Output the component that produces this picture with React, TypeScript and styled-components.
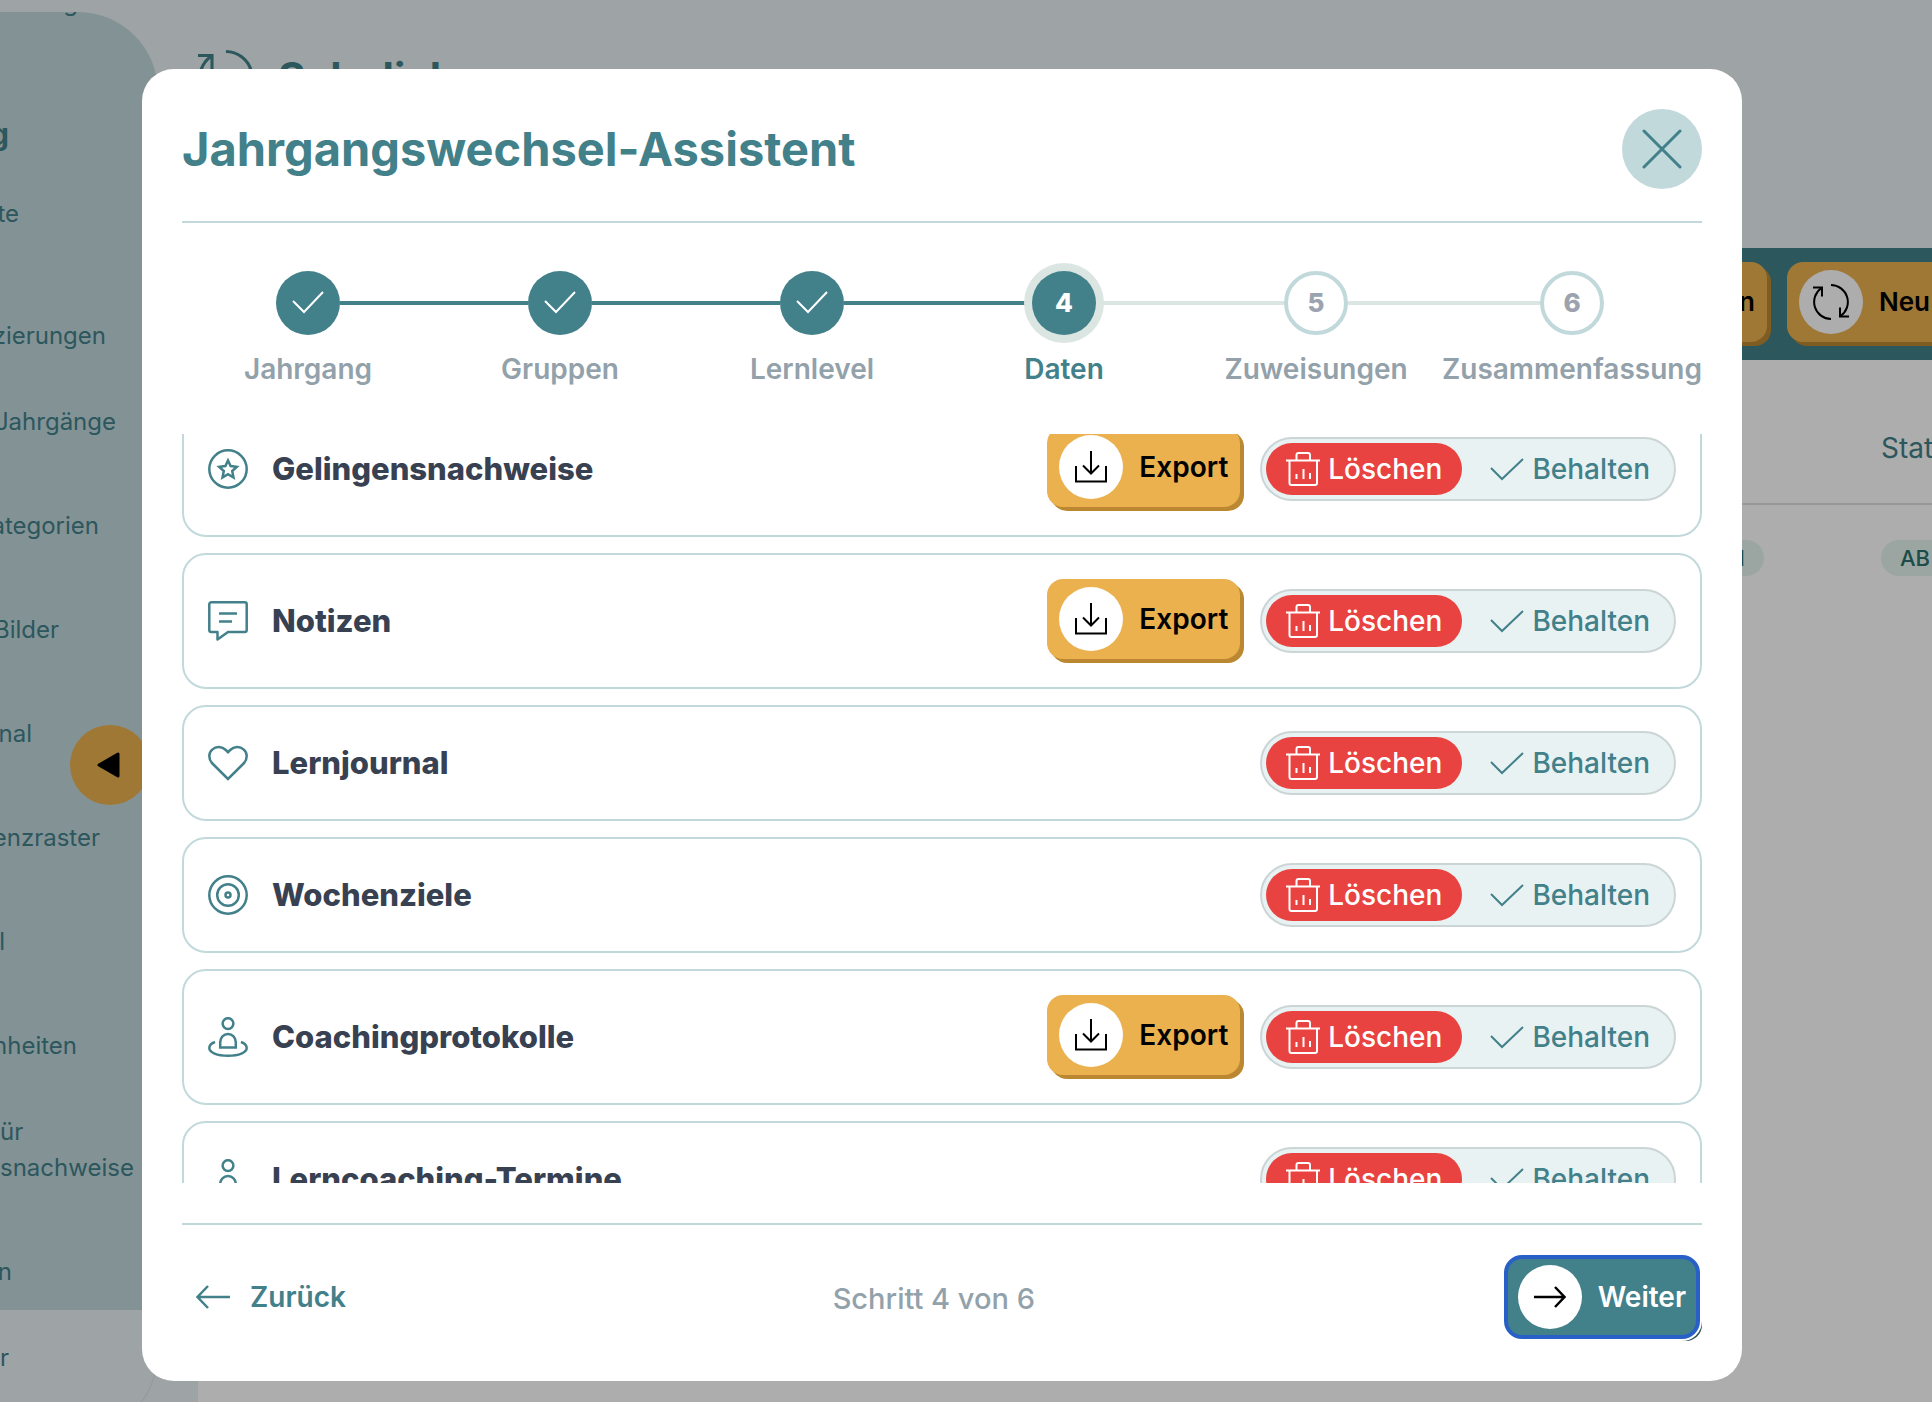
import React, { useLayoutEffect, useRef, useState } from "react";
import styled, { createGlobalStyle, css } from "styled-components";

const c = {
  teal: "#42808a",
  aqua: "#c2d9dc",
  mist: "#e9f2f3",
  sage: "#dbe5e1",
  amber: "#ebb14f",
  amberDark: "#bb8831",
  red: "#e84341",
  ink: "#384152",
  muted: "#92a1aa",
};

const Global = createGlobalStyle`
  *, *::before, *::after { box-sizing: border-box; }
  body { margin: 0; font-family: Inter, "Liberation Sans", sans-serif; font-size: 28px; line-height: 36px; color: ${c.teal}; }
  button { font: inherit; color: inherit; border: 0; background: none; padding: 0; cursor: pointer; }
  h1, h2, h3, ol, ul { margin: 0; padding: 0; list-style: none; }
  svg { display: block; flex: none; fill: none; stroke: currentColor; }
`;

/* ---------- icons ---------- */

const RefreshIcon = ({ size = 36, weight = 2 }: { size?: number; weight?: number }) => (
  <svg width={size} height={size} viewBox="0 0 36 36" strokeWidth={weight}>
    <path d="M18 35A17 17 0 0 1 8.500 4" />
    <path d="M0 3.500H9V12.500" />
    <path d="M18 1A17 17 0 0 1 27.500 32" />
    <path d="M36 32.500H27V23.500" />
  </svg>
);
const CloseIcon = () => (
  <svg width="40" height="40" viewBox="0 0 40 40" strokeWidth="3" strokeLinecap="round">
    <path d="M2 2L38 38M38 2L2 38" />
  </svg>
);
const StepCheckIcon = () => (
  <svg width="32" height="32" viewBox="0 0 32 32" strokeWidth="2">
    <path d="M1 14L12 25L31 5" />
  </svg>
);
const CheckIcon = () => (
  <svg width="34" height="34" viewBox="0 0 34 34" strokeWidth="2">
    <path d="M1 16L12 27L33 7" />
  </svg>
);
const TrashIcon = () => (
  <svg width="34" height="34" viewBox="0 0 34 34" strokeWidth="2" strokeLinejoin="round">
    <path d="M0 8.500H34M10.500 8.500V3A2 2 0 0 1 12.500 1H22A2 2 0 0 1 24 3V8.500" />
    <path d="M3.500 8.500V31A2 2 0 0 0 5.500 33H29A2 2 0 0 0 31 31V8.500" />
    <path d="M10.500 27V22M17.500 27V17M24 27V21" />
  </svg>
);
const DownloadIcon = () => (
  <svg width="32" height="32" viewBox="0 0 32 32" strokeWidth="2">
    <path d="M16 0V22M8 14.500L16 22.500L24 14.500M1 15V30.500H31V15" />
  </svg>
);
const ArrowLeft = () => (
  <svg width="34" height="24" viewBox="0 0 34 24" strokeWidth="2.500">
    <path d="M34 12H1.500M12 1L1.500 12L12 23" />
  </svg>
);
const ArrowRight = () => (
  <svg width="32" height="22" viewBox="0 0 32 22" strokeWidth="2.500">
    <path d="M0 11H30.500M21 1L30.500 11L21 21" />
  </svg>
);
const Triangle = () => (
  <svg width="28" height="28" viewBox="0 0 28 28">
    <path d="M3 14L22 3V25Z" fill="#000" stroke="#000" strokeWidth="3" strokeLinejoin="round" />
  </svg>
);

const Glyph = ({ children }: { children: React.ReactNode }) => (
  <svg width="40" height="40" viewBox="0 0 40 40" strokeWidth="2.500" stroke={c.teal} aria-hidden="true">
    {children}
  </svg>
);
const icons = {
  star: (
    <Glyph>
      <circle cx="20" cy="20" r="18.700" />
      <path d="M20 11.500L22.600 17L28.800 17.800L24.200 22L25.500 28.500L20 25.200L14.500 28.500L15.800 22L11.200 17.800L17.400 17Z" />
    </Glyph>
  ),
  note: (
    <Glyph>
      <path d="M3.300 1.300H36.700A2 2 0 0 1 38.700 3.300V29A2 2 0 0 1 36.700 31H20L9.500 38.500V31H3.300A2 2 0 0 1 1.300 29V3.300A2 2 0 0 1 3.300 1.300Z" strokeLinejoin="round" />
      <path d="M11 12.500H29M11 20.500H24" />
    </Glyph>
  ),
  heart: (
    <Glyph>
      <path d="M20 36L4.400 20.500C0.300 16.500 0.300 10 4.200 6.600C8.200 3 14 3.300 17.800 7L20 9.200L22.200 7C26 3.300 31.800 3 35.800 6.600C39.700 10 39.700 16.500 35.600 20.500Z" />
    </Glyph>
  ),
  target: (
    <Glyph>
      <circle cx="20" cy="20" r="18.700" />
      <circle cx="20" cy="20" r="10.800" />
      <circle cx="20" cy="20" r="2.500" />
    </Glyph>
  ),
  coach: (
    <Glyph>
      <circle cx="20" cy="6.600" r="5.400" />
      <path d="M12.200 30.500V25A7.800 8 0 0 1 27.800 25V30.500Z" />
      <path d="M7 25C3 26.500 1.300 28.500 1.300 31C1.300 35.500 9 38.700 20 38.700S38.700 35.500 38.700 31C38.700 28.500 37 26.500 33 25" />
    </Glyph>
  ),
};

/* ---------- page behind the dialog ---------- */

const Page = styled.div`
  display: flex;
  height: 100vh;
  overflow: hidden;
  background: #fff;
`;
const SideColumn = styled.div`
  flex: none;
  width: 198px;
  padding: 12px 40px 0 0;
  background: ${c.mist};
`;
const SidePanel = styled.nav`
  overflow: hidden;
  padding-bottom: 4px;
  border-top-right-radius: 80px;
  background: ${c.aqua};
`;
const SideCut = styled.div`
  display: flex;
  align-items: flex-end;
  justify-content: flex-end;
  width: 78px;
  height: 9px;
  font-size: 24px;
`;
const SideHeading = styled.h3`
  display: flex;
  align-items: flex-end;
  justify-content: flex-end;
  width: 9px;
  height: 141px;
  padding-bottom: 8px;
  font-size: 30px;
  line-height: 40px;
`;
const SideItem = styled.a<{ $end: number; $low?: boolean; $start?: boolean }>`
  display: flex;
  flex-direction: column;
  align-items: ${(p) => (p.$start ? "flex-start" : "flex-end")};
  justify-content: center;
  width: ${(p) => p.$end}px;
  height: 104px;
  padding-top: ${(p) => (p.$low ? 36 : 0)}px;
  font-size: 24px;
  white-space: nowrap;
  color: inherit;
  text-decoration: none;
`;
const SideFooter = styled.div`
  height: 124px;
  border: solid #d5e0e2;
  border-width: 0 1px 1px 0;
  border-bottom-right-radius: 80px;

  ${SideItem} {
    height: 96px;
  }
`;
const Collapse = styled.button`
  position: absolute;
  left: 70px;
  top: 725px;
  display: grid;
  place-items: center;
  width: 80px;
  height: 80px;
  border-radius: 50%;
  background: ${c.amber};
`;
const Main = styled.main`
  flex: 1;
  min-width: 0;
`;
const Hero = styled.header`
  display: flex;
  align-items: flex-start;
  gap: 24px;
  height: 248px;
  padding-top: 50px;
  background: ${c.mist};
`;
const PageTitle = styled.h1`
  font-size: 42px;
  line-height: 56px;
`;
const Bar = styled.div`
  display: grid;
  grid-template-columns: 1fr 145px;
  gap: 16px;
  padding: 14px 0;
  overflow: hidden;
  background: ${c.teal};
`;
const Table = styled.table`
  width: 100%;
  table-layout: fixed;
  border-collapse: collapse;
`;
const HeadCell = styled.th<{ $w?: number }>`
  width: ${(p) => (p.$w ? p.$w + "px" : "auto")};
  height: 144px;
  padding: 32px 0 0;
  overflow: hidden;
  border-bottom: 2px solid #dfdfdf;
  font-weight: 400;
  text-align: left;
`;
const Cell = styled.td<{ $end?: boolean }>`
  height: 104px;
  padding: 0 ${(p) => (p.$end ? 117 : 0)}px 0 0;
  overflow: hidden;
  text-align: ${(p) => (p.$end ? "right" : "left")};
`;
const Chip = styled.span`
  display: inline-block;
  min-width: 72px;
  padding: 0 19px;
  border-radius: 18px;
  background: #e5f5f0;
  color: #2c716c;
  font-size: 22px;
  font-weight: 500;
`;

/* ---------- buttons ---------- */

const ActionButton = styled.button<{ $tone?: "teal"; $focused?: boolean }>`
  display: flex;
  align-items: center;
  gap: 16px;
  flex: none;
  height: 80px;
  margin: 0 4px 4px 0;
  padding: 0 12px;
  border-radius: 16px;
  background: ${(p) => (p.$tone ? c.teal : c.amber)};
  box-shadow: 4px 4px 0 ${c.amberDark};
  color: ${(p) => (p.$tone ? "#fff" : "#000")};
  font-weight: 600;
  white-space: nowrap;
  ${(p) =>
    p.$focused &&
    css`
      outline: 4px solid #2860c8;
      outline-offset: -2px;
      box-shadow: 0 0 0 4px #fff, 4px 4px 0 #2d575e;
    `}
`;
const Disc = styled.span`
  display: grid;
  place-items: center;
  width: 64px;
  height: 64px;
  border-radius: 50%;
  background: #fff;
  color: #000;
`;
const BarButton = styled(ActionButton)`
  justify-self: end;
  min-width: 196px;
  justify-content: flex-end;
  font-size: 26px;
`;
const BarButtonCut = styled(ActionButton)`
  min-width: 240px;
  font-size: 26px;
`;

/* ---------- dialog ---------- */

const Overlay = styled.div`
  position: fixed;
  inset: 0;
  display: flex;
  padding: 69px 190px 21px 142px;
  background: rgba(0, 0, 0, 0.32);
`;
const Dialog = styled.section`
  flex: 1;
  min-width: 0;
  display: flex;
  flex-direction: column;
  padding: 40px;
  border-radius: 32px;
  background: #fff;
`;
const DialogHeader = styled.header`
  display: flex;
  align-items: center;
  justify-content: space-between;
  padding-bottom: 32px;
  border-bottom: 2px solid ${c.aqua};
`;
const DialogTitle = styled.h2`
  font-size: 47px;
  line-height: 56px;
`;
const CloseButton = styled.button`
  display: grid;
  place-items: center;
  width: 80px;
  height: 80px;
  border-radius: 50%;
  background: ${c.aqua};
`;
const Steps = styled.ol`
  display: flex;
  padding: 48px 0 47px;
`;
const Step = styled.li<{ $current?: boolean }>`
  flex: 1;
  display: flex;
  flex-direction: column;
  align-items: center;
  gap: 16px;
  font-weight: 600;
  color: ${(p) => (p.$current ? c.teal : c.muted)};
`;
const Track = styled.div`
  display: flex;
  align-items: center;
  align-self: stretch;
`;
const Line = styled.span<{ $color: string }>`
  flex: 1;
  height: 4px;
  background: ${(p) => p.$color};
`;
const Bullet = styled.span<{ $state: "done" | "current" | "open" }>`
  display: grid;
  place-items: center;
  width: 64px;
  height: 64px;
  border-radius: 50%;
  font-weight: 800;
  font-size: 26px;
  background: ${(p) => (p.$state === "open" ? "#fff" : c.teal)};
  color: ${(p) => (p.$state === "open" ? "#9ca3af" : "#fff")};
  border: ${(p) => (p.$state === "open" ? `4px solid ${c.aqua}` : "0")};
  box-shadow: ${(p) => (p.$state === "current" ? `0 0 0 8px ${c.sage}` : "none")};
`;
const List = styled.ul`
  flex: 1;
  min-height: 0;
  display: flex;
  flex-direction: column;
  gap: 16px;
  overflow-y: auto;
  scrollbar-width: none;
`;
const Card = styled.li`
  flex: none;
  display: flex;
  align-items: center;
  gap: 16px;
  padding: 24px;
  border: 2px solid ${c.aqua};
  border-radius: 24px;
`;
const CardTitle = styled.h3`
  flex: 1;
  padding-left: 8px;
  font-size: 31px;
  font-weight: 800;
  line-height: 40px;
  color: ${c.ink};
`;
const Toggle = styled.div`
  display: flex;
  gap: 8px;
  padding: 4px;
  border: 2px solid #ccd5d6;
  border-radius: 32px;
  background: ${c.mist};
`;
const Option = styled.label<{ $active: boolean }>`
  display: flex;
  align-items: center;
  gap: 8px;
  height: 52px;
  padding: 0 20px;
  border-radius: 26px;
  font-weight: 500;
  cursor: pointer;
  background: ${(p) => (p.$active ? c.red : "transparent")};
  color: ${(p) => (p.$active ? "#fff" : c.teal)};
`;
const Radio = styled.input`
  appearance: none;
  width: 0;
  margin: 0 -8px 0 0;
`;
const DialogFooter = styled.footer`
  display: flex;
  align-items: center;
  justify-content: space-between;
  margin-top: 40px;
  padding-top: 32px;
  border-top: 2px solid ${c.aqua};
`;
const BackButton = styled.button`
  display: flex;
  align-items: center;
  gap: 20px;
  padding: 0 16px 4px 14px;
  font-weight: 600;
`;
const Counter = styled.p`
  margin: 0;
  font-size: 29px;
  font-weight: 500;
  color: ${c.muted};
`;

const sideItems = [
  { end: 19, lines: ["te"] },
  { end: 106, lines: ["zierungen"], low: true },
  { end: 116, lines: ["Jahrgänge"] },
  { end: 99, lines: ["ategorien"] },
  { end: 59, lines: ["Bilder"] },
  { end: 32, lines: ["nal"] },
  { end: 100, lines: ["enzraster"] },
  { end: 5, lines: ["l"] },
  { end: 77, lines: ["nheiten"] },
  { end: 134, lines: ["ür", "snachweise"], start: true },
  { end: 12, lines: ["n"], low: true },
];

const steps = ["Jahrgang", "Gruppen", "Lernlevel", "Daten", "Zuweisungen", "Zusammenfassung"];
const current = 3;

const rows: { title: string; icon: keyof typeof icons; exportable?: boolean }[] = [
  { title: "Gelingensnachweise", icon: "star", exportable: true },
  { title: "Notizen", icon: "note", exportable: true },
  { title: "Lernjournal", icon: "heart" },
  { title: "Wochenziele", icon: "target" },
  { title: "Coachingprotokolle", icon: "coach", exportable: true },
  { title: "Lerncoaching-Termine", icon: "coach" },
];

const lineColor = (i: number) =>
  i < 0 || i >= steps.length - 1 ? "transparent" : i < current ? c.teal : c.sage;

function DataRow({ title, icon, exportable }: (typeof rows)[number]) {
  const [remove, setRemove] = useState(true);
  return (
    <Card>
      {icons[icon]}
      <CardTitle>{title}</CardTitle>
      {exportable && (
        <ActionButton type="button">
          <Disc><DownloadIcon /></Disc>
          Export
        </ActionButton>
      )}
      <Toggle role="radiogroup" aria-label={title}>
        <Option $active={remove}>
          <Radio type="radio" name={title} checked={remove} onChange={() => setRemove(true)} />
          <TrashIcon />
          Löschen
        </Option>
        <Option $active={!remove}>
          <Radio type="radio" name={title} checked={!remove} onChange={() => setRemove(false)} />
          <CheckIcon />
          Behalten
        </Option>
      </Toggle>
    </Card>
  );
}

export default function App() {
  const list = useRef<HTMLUListElement>(null);
  useLayoutEffect(() => {
    if (list.current) list.current.scrollTop = 33;
  }, []);

  return (
    <>
      <Global />
      <Page>
        <SideColumn>
          <SidePanel>
            <SideCut>g</SideCut>
            <SideHeading>g</SideHeading>
            {sideItems.map((it) => (
              <SideItem href="#" key={it.lines[0]} $end={it.end} $low={it.low} $start={it.start}>
                {it.lines.map((l) => <span key={l}>{l}</span>)}
              </SideItem>
            ))}
          </SidePanel>
          <SideFooter>
            <SideItem href="#" $end={9}>r</SideItem>
          </SideFooter>
          <Collapse type="button" aria-label="Menü einklappen"><Triangle /></Collapse>
        </SideColumn>
        <Main>
          <Hero>
            <RefreshIcon size={56} weight={2} />
            <PageTitle>Schuljahr</PageTitle>
          </Hero>
          <Bar>
            <BarButton type="button">n</BarButton>
            <BarButtonCut type="button">
              <Disc><RefreshIcon /></Disc>
              Neu
            </BarButtonCut>
          </Bar>
          <Table>
            <thead>
              <tr>
                <HeadCell />
                <HeadCell $w={51}>Stat</HeadCell>
              </tr>
            </thead>
            <tbody>
              <tr>
                <Cell $end><Chip>N</Chip></Cell>
                <Cell><Chip>AB</Chip></Cell>
              </tr>
            </tbody>
          </Table>
        </Main>
      </Page>
      <Overlay>
        <Dialog role="dialog" aria-modal="true" aria-labelledby="dialog-title">
          <DialogHeader>
            <DialogTitle id="dialog-title">Jahrgangswechsel-Assistent</DialogTitle>
            <CloseButton type="button" aria-label="Schließen"><CloseIcon /></CloseButton>
          </DialogHeader>
          <Steps>
            {steps.map((label, i) => {
              const state = i < current ? "done" : i === current ? "current" : "open";
              return (
                <Step key={label} $current={i === current}>
                  <Track>
                    <Line $color={lineColor(i - 1)} />
                    <Bullet $state={state}>{state === "done" ? <StepCheckIcon /> : i + 1}</Bullet>
                    <Line $color={lineColor(i)} />
                  </Track>
                  {label}
                </Step>
              );
            })}
          </Steps>
          <List ref={list}>
            {rows.map((row) => <DataRow key={row.title} {...row} />)}
          </List>
          <DialogFooter>
            <BackButton type="button"><ArrowLeft />Zurück</BackButton>
            <Counter>Schritt 4 von 6</Counter>
            <ActionButton type="button" $tone="teal" $focused>
              <Disc><ArrowRight /></Disc>
              Weiter
            </ActionButton>
          </DialogFooter>
        </Dialog>
      </Overlay>
    </>
  );
}
